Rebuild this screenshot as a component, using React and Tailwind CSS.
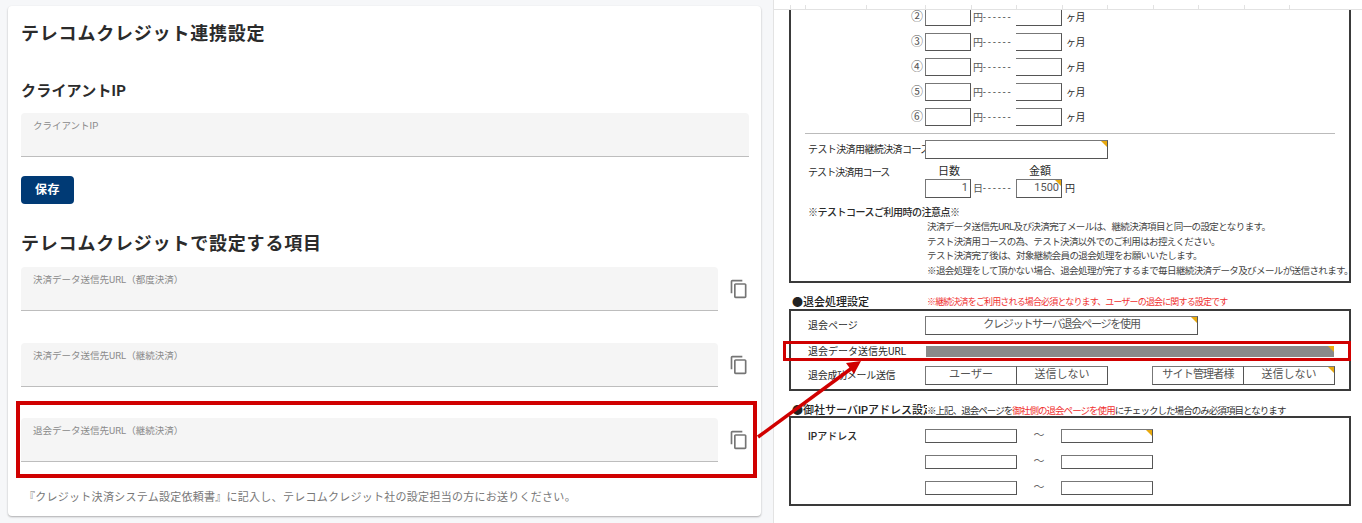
import { MdContentCopy } from "react-icons/md";

const LABELS = [
  { label: "決済データ送信先URL（都度決済）", gap: "mt-[11px]" },
  { label: "決済データ送信先URL（継続決済）", gap: "mt-[32px]" },
  { label: "退会データ送信先URL（継続決済）", gap: "mt-[31px]" },
];

const INSTALLMENTS = ["②", "③", "④", "⑤", "⑥"];
const RULER_TICKS = ["w-[17px]", "w-[15px]", "w-[61px]", "w-[59px]", "w-[46px]", "w-[45px]", "w-[46px]", "w-[45px]", "w-[46px]", "w-[45px]", "w-[46px]", "w-[45px]"];

const Corner = () => (
  <span className="absolute top-0 right-0 w-0 h-0 border-t-[6px] border-l-[6px] border-t-[#e8a90f] border-l-transparent" />
);

const Cell = ({ className = "", corner, children }) => (
  <div
    className={`relative flex items-center justify-center shrink-0 border border-[#777] border-b-[#555] border-r-[#555] bg-white text-[11px] text-[#555] ${className}`}
  >
    {children}
    {corner && <Corner />}
  </div>
);

const Field = ({ label, className = "" }) => (
  <div className={`h-[44px] rounded-t bg-[#f5f5f5] border-b border-[#bdbdbd] pl-[12px] pt-[6px] text-[9.5px] leading-[14px] text-[#8a8a8a] ${className}`}>
    {label}
  </div>
);

const Dashes = ({ unit }) => (
  <span className="ml-[2px] w-[43px] whitespace-nowrap text-[#555]">
    {unit}
    <span className="tracking-[2.2px]">------</span>
  </span>
);

export default function App() {
  return (
    <div className="relative flex h-[523px] w-[1362px] overflow-hidden bg-white font-['Roboto','Noto_Sans_CJK_JP',sans-serif]">
      {/* left: settings screen */}
      <div className="w-[773px] shrink-0 bg-[#f6f7f9] pl-[8px] pt-[6px]">
        <div className="h-[510px] w-[753px] rounded bg-white pl-[13px] pt-[16px] shadow-[0_1px_2px_rgba(0,0,0,0.3)]">
          <h1 className="text-[18px] leading-[24px] font-bold tracking-[0.8px] text-[#2b2b2b]">
            テレコムクレジット連携設定
          </h1>
          <h2 className="mt-[35px] text-[15px] leading-[20px] font-bold tracking-[0.2px] text-[#2b2b2b]">
            クライアントIP
          </h2>
          <Field label="クライアントIP" className="mt-[12px] w-[728px]" />
          <button className="mt-[19px] block h-[28px] w-[53px] rounded bg-[#003a75] text-[12px] font-bold tracking-[0.5px] text-white">
            保存
          </button>
          <h2 className="mt-[28px] text-[18px] leading-[24px] font-bold tracking-[0.8px] text-[#2b2b2b]">
            テレコムクレジットで設定する項目
          </h2>
          {LABELS.map((item) => (
            <div key={item.label} className={`flex items-center ${item.gap}`}>
              <Field label={item.label} className="w-[697px]" />
              <MdContentCopy className="ml-[11px] text-[#757575]" size={20} />
            </div>
          ))}
          <p className="mt-[28px] ml-[3px] text-[11px] leading-[16px] tracking-[0.27px] text-[#777]">
            『クレジット決済システム設定依頼書』に記入し、テレコムクレジット社の設定担当の方にお送りください。
          </p>
        </div>
      </div>

      {/* right: request form excerpt */}
      <div className="flex-1 border-l border-[#e3e3e3] text-[#2a2a2a]">
        <div className="flex h-[10px] border-b border-[#e2e2e2]">
          {RULER_TICKS.map((w, i) => (
            <div key={i} className={`${w} mt-[5px] border-r border-[#e2e2e2]`} />
          ))}
        </div>

        <div className="ml-[15px] h-[273px] w-[562px] border-x-2 border-b-2 border-[#3a3a3a]">
          <div className="flex flex-col gap-[7px] overflow-hidden pl-[120px]">
            {INSTALLMENTS.map((mark) => (
              <div key={mark} className="flex h-[18px] shrink-0 items-center text-[10px] first:-mt-[2px]">
                <span className="w-[14px] text-[12px] leading-[14px] text-[#555]">{mark}</span>
                <Cell className="h-[18px] w-[46px]" />
                <Dashes unit="円" />
                <Cell className="h-[18px] w-[46px] border-l-0" />
                <span className="ml-[4px] tracking-[-0.5px]">ヶ月</span>
              </div>
            ))}
          </div>
          <div className="ml-[14px] mt-[7px] w-[530px] border-t border-[#bbb]" />
          <div className="ml-[17px] mt-[6px] flex h-[19px] items-center text-[10px]">
            <span className="w-[117px] overflow-hidden whitespace-nowrap tracking-[-0.6px]">テスト決済用継続決済コース</span>
            <Cell className="h-[19px] w-[183px]" corner />
          </div>
          <div className="ml-[17px] mt-[7px] flex h-[13px] items-center text-[10px]">
            <span className="w-[130px] tracking-[-0.9px]">テスト決済用コース</span>
            <span className="w-[91px] text-[11px]">日数</span>
            <span className="text-[11px]">金額</span>
          </div>
          <div className="ml-[134px] flex h-[19px] items-center text-[10px]">
            <Cell className="h-[19px] w-[46px] justify-end pr-[2px] text-[10px]">1</Cell>
            <Dashes unit="日" />
            <Cell className="h-[19px] w-[46px] justify-end pr-[2px] text-[10px]" corner>1500</Cell>
            <span className="ml-[3px]">円</span>
          </div>
          <p className="ml-[17px] mt-[8px] text-[10px] leading-[14px] font-medium tracking-[-0.5px]">※テストコースご利用時の注意点※</p>
          <div className="ml-[136px] whitespace-nowrap text-[9.5px] leading-[14.5px] tracking-[-0.6px] text-[#444]">
            <p>決済データ送信先URL及び決済完了メールは、継続決済項目と同一の設定となります。</p>
            <p>テスト決済用コースの為、テスト決済以外でのご利用はお控えください。</p>
            <p>テスト決済完了後は、対象継続会員の退会処理をお願いいたします。</p>
            <p>※退会処理をして頂かない場合、退会処理が完了するまで毎日継続決済データ及びメールが送信されます。</p>
          </div>
        </div>

        <div className="ml-[18px] mt-[13px] flex h-[14px] items-center">
          <span className="w-[135px] text-[11px] font-medium text-[#222]">●退会処理設定</span>
          <span className="whitespace-nowrap text-[9px] tracking-[-0.85px] text-[#f03030]">※継続決済をご利用される場合必須となります、ユーザーの退会に関する設定です</span>
        </div>
        <div className="ml-[15px] -mt-[1px] h-[82px] w-[562px] border-2 border-[#3a3a3a] pt-[5px]">
          <div className="flex h-[19px] items-center text-[10px]">
            <span className="ml-[17px] w-[117px]">退会ページ</span>
            <Cell className="h-[19px] w-[273px] text-[10.5px] tracking-[-1.2px]" corner>クレジットサーバ退会ページを使用</Cell>
          </div>
          <div className="mt-[9px] flex h-[14px] items-center text-[10px]">
            <span className="ml-[17px] w-[118px] whitespace-nowrap">退会データ送信先URL</span>
            <div className="relative h-[11px] w-[408px] bg-[#8a8a8a]">
              <Corner />
            </div>
          </div>
          <div className="mt-[8px] flex h-[19px] items-center text-[10px]">
            <span className="ml-[17px] w-[117px] whitespace-nowrap tracking-[-0.3px]">退会成功メール送信</span>
            <Cell className="h-[19px] w-[92px]">ユーザー</Cell>
            <Cell className="h-[19px] w-[91px] border-l-0">送信しない</Cell>
            <div className="w-[44px]" />
            <Cell className="h-[19px] w-[92px] tracking-[-0.8px]">サイト管理者様</Cell>
            <Cell className="h-[19px] w-[91px] border-l-0" corner>送信しない</Cell>
          </div>
        </div>

        <div className="ml-[18px] mt-[13px] flex h-[14px] items-center whitespace-nowrap">
          <span className="w-[135px] overflow-hidden text-[11px] font-medium text-[#222]">●御社サーバIPアドレス設定</span>
          <span className="text-[9.5px] tracking-[-0.95px] text-[#333]">
            ※上記、退会ページを<span className="text-[#f03030]">御社側の退会ページを使用</span>にチェックした場合のみ必須項目となります
          </span>
        </div>
        <div className="ml-[15px] -mt-[2px] h-[90px] w-[562px] border-2 border-[#3a3a3a] pt-[11px] text-[10px]">
          {[0, 1, 2].map((i) => (
            <div key={i} className="mb-[12px] flex h-[14px] items-center">
              <span className="ml-[17px] w-[117px] font-medium">{i === 0 && "IPアドレス"}</span>
              <Cell className="h-[14px] w-[92px]" />
              <span className="w-[44px] text-center text-[11px] text-[#666]">〜</span>
              <Cell className="h-[14px] w-[92px]" corner={i === 0} />
            </div>
          ))}
        </div>
      </div>

      {/* red callouts over both halves */}
      <div className="absolute left-[16px] top-[401px] h-[77px] w-[741px] border-4 border-[#d00000]" />
      <div className="absolute left-[783px] top-[341px] h-[20px] w-[568px] border-[3px] border-[#d00000]" />
      <svg className="absolute left-0 top-0" width="1362" height="523">
        <line x1="758" y1="437" x2="852" y2="368" stroke="#d00000" strokeWidth="3.5" />
        <polygon points="861,361 846,363 854,374" fill="#d00000" />
      </svg>
    </div>
  );
}
